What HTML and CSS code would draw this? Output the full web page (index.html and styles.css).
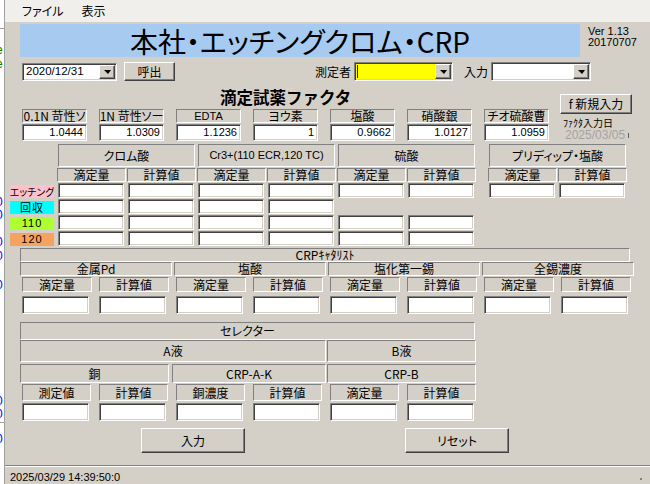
FILE: index.html
```html
<!DOCTYPE html>
<html lang="ja">
<head>
<meta charset="utf-8">
<title>本社・エッチングクロム・CRP</title>
<link rel="stylesheet" href="styles.css">
</head>
<body>
<div class="behind">
  <div class="bh-line l1"></div>
  <div class="bh g e1">e</div>
  <div class="bh g e2">e</div>
  <div class="bh g e3">l</div>
  <div class="bh b e4">-</div>
  <div class="bh b e5">0</div>
  <div class="bh b e6">0</div>
  <div class="bh b e7">0</div>
  <div class="bh b e8">0</div>
  <div class="bh b e9">0</div>
  <div class="bh b e10">0</div>
  <div class="bh b e11">0</div>
  <div class="bh-line l2"></div>
  <div class="bh b e12">0</div>
</div>
<div class="win">
  <div class="menubar"><span>ファイル</span><span>表示</span></div>

  <div class="title-row">
    <div class="banner">本社・エッチングクロム・CRP</div>
    <div class="ver">Ver 1.13<br>20170707</div>
  </div>

  <div class="ctrls">
    <div class="combo date"><span class="cv">2020/12/31</span><span class="dd"></span></div>
    <div class="btn call">呼出</div>
    <span class="lbl sokutei">測定者</span>
    <div class="combo who"><span class="caret"></span><span class="dd"></span></div>
    <span class="lbl nyu">入力</span>
    <div class="combo inp"><span class="dd"></span></div>
  </div>

  <div class="fac-area">
    <div class="fac-left">
      <div class="heading">滴定試薬ファクタ</div>
      <div class="facs">
        <div class="fac"><div class="box fl">0.1N 苛性ソ</div><div class="tb num">1.0444</div></div>
        <div class="fac"><div class="box fl">1N 苛性ソー</div><div class="tb num">1.0309</div></div>
        <div class="fac"><div class="box fl lat">EDTA</div><div class="tb num">1.1236</div></div>
        <div class="fac"><div class="box fl">ヨウ素</div><div class="tb num">1</div></div>
        <div class="fac"><div class="box fl">塩酸</div><div class="tb num">0.9662</div></div>
        <div class="fac"><div class="box fl">硝酸銀</div><div class="tb num">1.0127</div></div>
        <div class="fac"><div class="box fl">チオ硫酸曹</div><div class="tb num">1.0959</div></div>
      </div>
    </div>
    <div class="fac-right">
      <div class="btn newf">f 新規入力</div>
      <div class="fdate-lbl">ﾌｧｸﾀ入力日</div>
      <div class="fdate">2025/03/05<span class="tick"></span></div>
    </div>
  </div>

  <div class="tbl">
    <div></div>
    <div class="box gh span2">クロム酸</div>
    <div class="box gh span2 lat">Cr3+(110 ECR,120 TC)</div>
    <div class="box gh span2">硫酸</div>
    <div></div>
    <div class="box gh span2">プリディップ・塩酸</div>

    <div></div>
    <div class="box sh">滴定量</div><div class="box sh">計算値</div>
    <div class="box sh">滴定量</div><div class="box sh">計算値</div>
    <div class="box sh">滴定量</div><div class="box sh">計算値</div>
    <div></div>
    <div class="box sh">滴定量</div><div class="box sh">計算値</div>

    <div class="rl pink">エッチング</div>
    <div class="tb ti"></div><div class="tb ti"></div><div class="tb ti"></div><div class="tb ti"></div><div class="tb ti"></div><div class="tb ti"></div>
    <div></div>
    <div class="tb ti"></div><div class="tb ti"></div>

    <div class="rl cyan">回収</div>
    <div class="tb ti"></div><div class="tb ti"></div><div class="tb ti"></div><div class="tb ti"></div><div></div><div></div>
    <div></div>
    <div></div><div></div>

    <div class="rl lime">110</div>
    <div class="tb ti"></div><div class="tb ti"></div><div class="tb ti"></div><div class="tb ti"></div><div class="tb ti"></div><div class="tb ti"></div>
    <div></div>
    <div></div><div></div>

    <div class="rl sand">120</div>
    <div class="tb ti"></div><div class="tb ti"></div><div class="tb ti"></div><div class="tb ti"></div><div class="tb ti"></div><div class="tb ti"></div>
    <div></div>
    <div></div><div></div>
  </div>

  <div class="crp">
    <div class="box crph">CRPｷｬﾀﾘｽﾄ</div>
    <div class="box cg span2">金属Pd</div>
    <div class="box cg span2">塩酸</div>
    <div class="box cg span2">塩化第一錫</div>
    <div class="box cg span2">全錫濃度</div>
    <div class="box cs">滴定量</div><div class="box cs">計算値</div>
    <div class="box cs">滴定量</div><div class="box cs">計算値</div>
    <div class="box cs">滴定量</div><div class="box cs">計算値</div>
    <div class="box cs">滴定量</div><div class="box cs">計算値</div>
    <div class="tb ci"></div><div class="tb ci"></div><div class="tb ci"></div><div class="tb ci"></div>
    <div class="tb ci"></div><div class="tb ci"></div><div class="tb ci"></div><div class="tb ci"></div>
  </div>

  <div class="sel">
    <div class="box selh">セレクター</div>
    <div class="box sa">A液</div>
    <div class="box sb">B液</div>
    <div class="box s-cu">銅</div>
    <div class="box s-ak">CRP-A-K</div>
    <div class="box s-b">CRP-B</div>
    <div class="box ss">測定値</div><div class="box ss">計算値</div>
    <div class="box ss">銅濃度</div><div class="box ss">計算値</div>
    <div class="box ss">滴定量</div><div class="box ss">計算値</div>
    <div class="tb si"></div><div class="tb si"></div><div class="tb si"></div>
    <div class="tb si"></div><div class="tb si"></div><div class="tb si"></div>
  </div>

  <div class="btns">
    <div class="btn big b-in">入力</div>
    <div class="btn big b-re">リセット</div>
  </div>

  <div class="status"><span>2025/03/29 14:39:50:0</span><span class="grip"></span></div>
</div>
</body>
</html>
```

FILE: styles.css
```css
* { box-sizing: border-box; margin: 0; padding: 0; }
html, body { width: 650px; height: 484px; overflow: hidden; }
body {
  display: flex;
  background: #d4d0c8;
  font-family: "Liberation Sans", "Noto Sans CJK JP", sans-serif;
  font-size: 12px;
  line-height: 1;
  color: #000;
  font-feature-settings: "palt";
}

/* window behind, on the left edge */
.behind { width: 5px; flex: none; height: 484px; background: #fff; border-right: 1px solid #a0a0a0; overflow: hidden; }
.bh { height: 12px; line-height: 12px; margin-left: -4px; font-size: 12px; white-space: nowrap; }
.bh.g { color: #008000; }
.bh.b { color: #0000ff; }
.bh-line { height: 1px; background: #a0a0a0; }
.l1 { margin-top: 28px; }
.e1 { margin-top: 15px; }
.e2 { margin-top: 2px; }
.e3 { margin-top: 14px; }
.e4 { margin-top: 44px; }
.e5 { margin-top: 44px; }
.e6 { margin-top: 1px; }
.e7 { margin-top: 15px; }
.e8 { margin-top: 2px; }
.e9 { margin-top: 17px; }
.e10 { margin-top: 104px; }
.e11 { margin-top: 1px; }
.l2 { margin-top: 2px; }
.e12 { margin-top: 10px; }

.win { flex: 1; display: flex; flex-direction: column; height: 484px; min-width: 0; }

.menubar {
  height: 22px; flex: none; background: #f0efeb;
  display: flex; align-items: center; gap: 18px; padding-left: 17px;
  font-family: "Noto Sans CJK JP", sans-serif;
}

/* common widgets */
.box {
  display: flex; align-items: center; justify-content: center;
  border: 1px solid; border-color: #808080 #fff #fff #808080;
  white-space: nowrap; overflow: hidden;
  font-family: "Noto Sans CJK JP", sans-serif;
}
.lat { font-family: "Liberation Sans", sans-serif; font-size: 11px; }
.tb {
  background: #fff;
  border: 1px solid; border-color: #808080 #fff #fff #808080;
  box-shadow: inset 1px 1px #404040, inset -1px -1px #d4d0c8;
}
.btn {
  display: flex; align-items: center; justify-content: center;
  background: #d4d0c8;
  border: 1px solid; border-color: #fff #404040 #404040 #fff;
  box-shadow: inset -1px -1px #808080;
  font-family: "Noto Sans CJK JP", sans-serif;
  white-space: nowrap;
}

/* title */
.title-row { display: flex; height: 33px; margin-top: 2px; flex: none; }
.banner {
  width: 560px; margin-left: 15px; background: #a6caf0;
  display: flex; align-items: center; justify-content: center;
  font-family: "Noto Sans CJK JP", sans-serif; font-size: 28px;
}
.ver { margin-left: 8px; padding-top: 2px; font-size: 11px; line-height: 10.5px; font-family: "Liberation Sans", sans-serif; }

/* controls row */
.ctrls { display: flex; align-items: center; height: 19px; margin-top: 5px; flex: none; }
.combo {
  display: flex; align-items: stretch; height: 19px; padding: 1px;
  background: #fff;
  border: 1px solid; border-color: #808080 #fff #fff #808080;
  box-shadow: inset 1px 1px #404040, inset -1px -1px #d4d0c8;
}
.dd {
  margin-left: auto; width: 16px; flex: none;
  background: #d4d0c8;
  border: 1px solid; border-color: #fff #404040 #404040 #fff;
  box-shadow: inset -1px -1px #808080;
  display: flex; align-items: center; justify-content: center;
}
.dd::after { content: ""; width: 0; height: 0; border-top: 4px solid #000; border-left: 4px solid transparent; border-right: 3px solid transparent; margin-top: 1px; }
.date { width: 95px; height: 18px; margin-left: 17px; }
.cv { font-size: 11.5px; padding-left: 2px; align-self: center; font-family: "Liberation Sans", sans-serif; }
.call { width: 51px; height: 19px; margin-left: 7px; }
.lbl { font-family: "Noto Sans CJK JP", sans-serif; }
.sokutei { margin-left: 140px; }
.who { width: 99px; margin-left: 3px; background: #ff0; }
.caret { width: 1px; background: #0000ff; margin: 1px 0 1px 1px; }
.nyu { margin-left: 11px; }
.inp { width: 100px; margin-left: 3px; }

/* factor area */
.fac-area { display: flex; height: 53px; margin-top: 7px; flex: none; }
.fac-left { width: 533px; margin-left: 17px; display: flex; flex-direction: column; }
.heading {
  height: 20px; margin-left: 198px; font-weight: 700; font-size: 16.5px; line-height: 18px;
  font-family: "Noto Sans CJK JP", sans-serif; font-feature-settings: normal;
  display: flex; align-items: flex-start;
}
.facs { display: flex; gap: 12px; margin-top: 1px; }
.fac { width: 65px; display: flex; flex-direction: column; gap: 1px; }
.fl { height: 14px; }
.fac .tb { height: 17px; }
.num {
  display: flex; align-items: center; justify-content: flex-end; padding-right: 3px;
  font-family: "Liberation Sans", sans-serif; font-size: 11px;
}
.fac-right { margin-left: 5px; padding-top: 6px; display: flex; flex-direction: column; }
.newf { width: 72px; height: 20px; }
.fdate-lbl { margin-top: 3px; margin-left: 3px; height: 11px; font-size: 10px; line-height: 11px; font-family: "Noto Sans CJK JP", sans-serif; white-space: nowrap; }
.fdate { margin-top: 2px; margin-left: 5px; height: 11px; font-size: 12px; line-height: 11px; color: #a3a3a3; display: flex; align-items: center; white-space: nowrap; }
.tick { width: 1px; height: 5px; background: #606060; margin-left: 3px; }

/* main table */
.tbl {
  display: grid; margin-top: 3px; flex: none;
  grid-template-columns: 52px repeat(6, 70px) 11px repeat(2, 70px);
  grid-template-rows: 23px 16px 16px 16px 16px 16px;
}
.span2 { grid-column: span 2; }
.gh { margin: 0 2px 0 1px; }
.sh { margin: 1px 1px 1px 0; }
.ti { margin: 0 3px 1px 1px; }
.rl {
  margin: 2px 3px 1px 5px; display: flex; align-items: center; justify-content: center;
  font-family: "Noto Sans CJK JP", sans-serif; font-size: 10px; white-space: nowrap; overflow: hidden;
}
.pink { background: #ffc0cb; }
.cyan { background: #00ffff; letter-spacing: 1px; font-size: 11px; }
.lime { background: #adff2f; font-family: "Liberation Sans", sans-serif; letter-spacing: 1px; font-size: 11px; }
.sand { background: #f4a460; font-family: "Liberation Sans", sans-serif; letter-spacing: 1px; font-size: 11px; }

/* CRP */
.crp {
  display: grid; margin: 1px 0 0 15px; flex: none;
  grid-template-columns: repeat(8, 77px);
  grid-template-rows: 14px 15px 16px 21px;
}
.crph { grid-column: span 8; margin-right: 6px; }
.cg { margin: 0 2px 1px 0; }
.cs { margin-left: 2px; width: 70px; height: 15px; }
.ci { margin: 3px 0 0 2px; width: 67px; height: 18px; }

/* selector */
.sel {
  display: grid; margin: 8px 0 0 15px; flex: none;
  grid-template-columns: repeat(6, 77px);
  grid-template-rows: 18px 23px 20px 19px 19px;
  width: 462px;
}
.selh { grid-column: span 6; margin-right: 7px; }
.sa { grid-column: span 4; margin-right: 2px; margin-bottom: 1px; }
.sb { grid-column: span 2; margin: 0 6px 1px -1px; }
.s-cu { grid-column: span 2; margin: 1px 5px 0 0; }
.s-ak { grid-column: span 2; margin: 1px 2px 0 -2px; }
.s-b { grid-column: span 2; margin: 1px 6px 0 -1px; }
.ss { margin: 1px 0 1px 2px; width: 69px; }
.si { margin: 1px 0 0 2px; width: 67px; height: 18px; }

/* buttons */
.btns { display: flex; height: 25px; margin-top: 7px; flex: none; }
.big { width: 104px; height: 25px; }
.b-in { margin-left: 136px; }
.b-re { margin-left: 160px; }

/* status bar */
.status {
  margin-top: auto; height: 19px; flex: none;
  border-top: 1px solid #808080; box-shadow: inset 0 1px #fff;
  display: flex; align-items: flex-end; justify-content: space-between;
  padding: 0 8px 1px 5px;
  font-family: "Liberation Sans", sans-serif; font-size: 11px;
}
.grip { width: 2px; height: 2px; background: #808080; margin-bottom: 3px; }
```
